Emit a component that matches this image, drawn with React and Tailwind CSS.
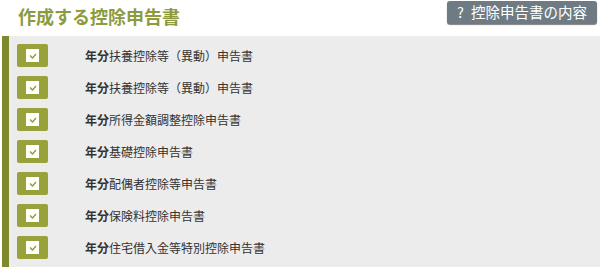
export default function App() {
  const forms = [
    '扶養控除等（異動）申告書',
    '扶養控除等（異動）申告書',
    '所得金額調整控除申告書',
    '基礎控除申告書',
    '配偶者控除等申告書',
    '保険料控除申告書',
    '住宅借入金等特別控除申告書',
  ];

  return (
    <div className="w-[600px] h-[269px] bg-white overflow-hidden" style={{ fontFamily: '"Noto Sans CJK JP", "Noto Sans", sans-serif' }}>
      <div className="flex justify-between items-start h-[36px] pl-[18px] pr-[3px] pt-[1px]">
        <h1 className="text-[18px] leading-[24px] mt-[3px] font-bold text-[#8d9a3e]">作成する控除申告書</h1>
        <button className="h-[23px] w-[150px] flex items-center justify-center gap-[7px] rounded-[3px] bg-[#6f7b84] text-white text-[14.5px] leading-none shadow-[0_1px_1px_rgba(0,0,0,0.5)]">
          <span>?</span>
          <span>控除申告書の内容</span>
        </button>
      </div>
      <div className="ml-[2px] border-l-[7px] border-[#7f892c] bg-[#ececec] h-[231px] pt-[8px] pl-[8px] flex flex-col gap-[9px]">
        {forms.map((name, i) => (
          <div key={i} className="flex items-center h-[23px]">
            <div className="w-[31px] h-[23px] rounded-[2px] bg-[#99a13b] flex items-center justify-center">
              <div className="w-[13px] h-[13px] bg-white flex items-center justify-center">
                <svg width="8" height="6" viewBox="0 0 8 6">
                  <path d="M1 2.5 L3.5 5 L7 1" fill="none" stroke="#99a13b" strokeWidth="1.5" />
                </svg>
              </div>
            </div>
            <p className="ml-[37px] text-[12px] text-[#333]">
              <span className="font-bold">年分</span>
              {name}
            </p>
          </div>
        ))}
      </div>
    </div>
  );
}
